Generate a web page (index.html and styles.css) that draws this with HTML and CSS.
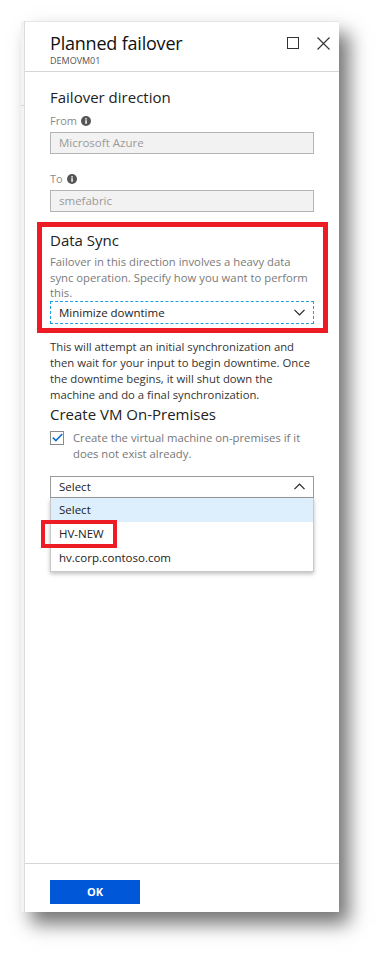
FILE: index.html
```html
<!DOCTYPE html>
<html>
<head>
<meta charset="utf-8">
<link rel="stylesheet" href="styles.css">
</head>
<body>
<div class="blade">
  <div class="strip"><div class="tick"></div></div>
  <div class="main">
    <div class="header">
      <div class="titles">
        <div class="title">Planned failover</div>
        <div class="subtitle">DEMOVM01</div>
      </div>
      <div class="controls">
        <svg width="12" height="12" viewBox="0 0 12 12"><rect x="0.5" y="0.5" width="11" height="11" fill="none" stroke="#333" stroke-width="1"/></svg>
        <svg width="13" height="13" viewBox="0 0 13 13"><path d="M0.5 0.5L12.5 12.5M12.5 0.5L0.5 12.5" stroke="#333" stroke-width="1.1" fill="none"/></svg>
      </div>
    </div>
    <div class="body">
      <div class="section-title first">Failover direction</div>
      <div class="label">From <svg class="info" width="10" height="10" viewBox="0 0 10 10"><circle cx="5" cy="5" r="5" fill="#555"/><rect x="4.3" y="4.2" width="1.5" height="3.6" fill="#fff"/><circle cx="5.05" cy="2.8" r="0.85" fill="#fff"/></svg></div>
      <div class="input">Microsoft Azure</div>
      <div class="label">To <svg class="info" width="10" height="10" viewBox="0 0 10 10"><circle cx="5" cy="5" r="5" fill="#555"/><rect x="4.3" y="4.2" width="1.5" height="3.6" fill="#fff"/><circle cx="5.05" cy="2.8" r="0.85" fill="#fff"/></svg></div>
      <div class="input last">smefabric</div>

      <div class="highlight">
        <div class="section-title">Data Sync</div>
        <div class="desc">Failover in this direction involves a heavy data<br>sync operation. Specify how you want to perform<br>this.</div>
        <div class="select focused">
          <span>Minimize downtime</span>
          <svg width="11" height="7" viewBox="0 0 11 7"><path d="M0.5 0.8L5.5 5.8L10.5 0.8" stroke="#222" stroke-width="1.2" fill="none"/></svg>
        </div>
      </div>

      <div class="para">This will attempt an initial synchronization and<br>then wait for your input to begin downtime. Once<br>the downtime begins, it will shut down the<br>machine and do a final synchronization.</div>
      <div class="section-title vm">Create VM On-Premises</div>
      <div class="check-row">
        <div class="checkbox"><svg width="11" height="9" viewBox="0 0 11 9"><path d="M0.8 4.6L3.9 7.6L10.2 1" stroke="#0a6fd0" stroke-width="1.6" fill="none"/></svg></div>
        <div class="check-text">Create the virtual machine on-premises if it<br>does not exist already.</div>
      </div>
      <div class="combo">
        <div class="select open">
          <span>Select</span>
          <svg width="11" height="7" viewBox="0 0 11 7"><path d="M0.5 6.2L5.5 1.2L10.5 6.2" stroke="#222" stroke-width="1.2" fill="none"/></svg>
        </div>
        <div class="list">
          <div class="item selected">Select</div>
          <div class="item marked">HV-NEW</div>
          <div class="item tall">hv.corp.contoso.com</div>
        </div>
      </div>
    </div>
    <div class="footer">
      <div class="btn">OK</div>
    </div>
  </div>
</div>
</body>
</html>
```
FILE: styles.css
```css
html, body { margin: 0; padding: 0; background: #fff; }
body {
  font-family: "Open Sans", "Noto Sans", sans-serif;
  color: #222;
  width: 381px;
  height: 954px;
  overflow: hidden;
}
.blade {
  margin: 21px 0 0 21px;
  width: 318px;
  height: 891px;
  display: flex;
  background: #fff;
  box-shadow: 10px 12px 18px rgba(0,0,0,0.55);
}
.strip {
  width: 3px;
  background: #f3f3f3;
  border-right: 1px solid #dcdcdc;
}
.tick {
  margin-top: 84px;
  height: 1px;
  background: #d6d6d6;
}
.main {
  flex: 1;
  display: flex;
  flex-direction: column;
  border-top: 1px solid #e6e6e6;
}
.header {
  display: flex;
  justify-content: space-between;
  padding: 9px 9px 0 25px;
  height: 40px;
  border-bottom: 1px solid #d6d6d6;
}
.title {
  font-size: 18px;
  line-height: 24px;
  color: #111;
  letter-spacing: -0.2px;
}
.subtitle {
  font-size: 9px;
  line-height: 12px;
  color: #555;
}
.controls {
  display: flex;
  gap: 18px;
  padding-top: 6px;
}
.body {
  flex: 1;
  padding: 0 25px;
}
.section-title {
  font-size: 15px;
  line-height: 20px;
  color: #222;
}
.section-title.first { margin-top: 15px; }
.label {
  font-size: 11px;
  line-height: 14px;
  color: #8a8a8a;
  margin-top: 7px;
  display: flex;
  align-items: center;
  gap: 4px;
}
.input {
  margin-top: 4px;
  height: 20px;
  border: 1px solid #b4b4b4;
  background: #f2f2f2;
  color: #9a9a9a;
  font-size: 11.5px;
  line-height: 20px;
  padding-left: 8px;
  margin-bottom: 18px;
}
.input.last { margin-bottom: 13px; }
.highlight {
  margin: -3px -14px 0 -13px;
  border: 5px solid #ed1c24;
  padding: 3px 9px 4px 8px;
}
.desc {
  font-size: 11.3px;
  line-height: 15.5px;
  color: #7a7a7a;
  margin-top: 4px;
}
.select {
  height: 21px;
  border: 1px solid #a6a6a6;
  display: flex;
  align-items: center;
  justify-content: space-between;
  padding: 0 8px;
  font-size: 11.5px;
  color: #222;
}
.select.focused {
  border: 1px dashed #1aa1e0;
}
.para {
  font-size: 11.3px;
  line-height: 16px;
  color: #333;
  margin-top: 6px;
}
.section-title.vm { margin-top: 1px; }
.check-row {
  display: flex;
  gap: 9px;
  margin-top: 6px;
}
.checkbox {
  width: 12px;
  height: 12px;
  border: 1px solid #8a8a8a;
  display: flex;
  align-items: center;
  justify-content: center;
  flex: none;
  margin-top: 1px;
}
.check-text {
  font-size: 11.3px;
  line-height: 16px;
  color: #777;
}
.combo { margin-top: 14px; }
.select.open { border-color: #9a9a9a; height: 20px; }
.list {
  border: 1px solid #c8c8c8;
  border-top: none;
  box-shadow: 0 2px 4px rgba(0,0,0,0.25);
}
.item {
  height: 24px;
  line-height: 24px;
  font-size: 11.5px;
  padding-left: 8px;
  color: #222;
}
.item.tall { height: 25px; }
.item.selected { background: #ddeffc; }
.item.marked {
  margin-left: -8px;
  width: 56px;
  padding-left: 16px;
  outline: 4px solid #ed1c24;
  outline-offset: -2px;
}
.footer {
  border-top: 1px solid #d6d6d6;
  height: 49px;
  padding: 16px 0 0 25px;
  box-sizing: border-box;
}
.btn {
  width: 90px;
  height: 24px;
  background: #0058d9;
  color: #fff;
  font-weight: bold;
  font-size: 11px;
  line-height: 24px;
  text-align: center;
}
```
